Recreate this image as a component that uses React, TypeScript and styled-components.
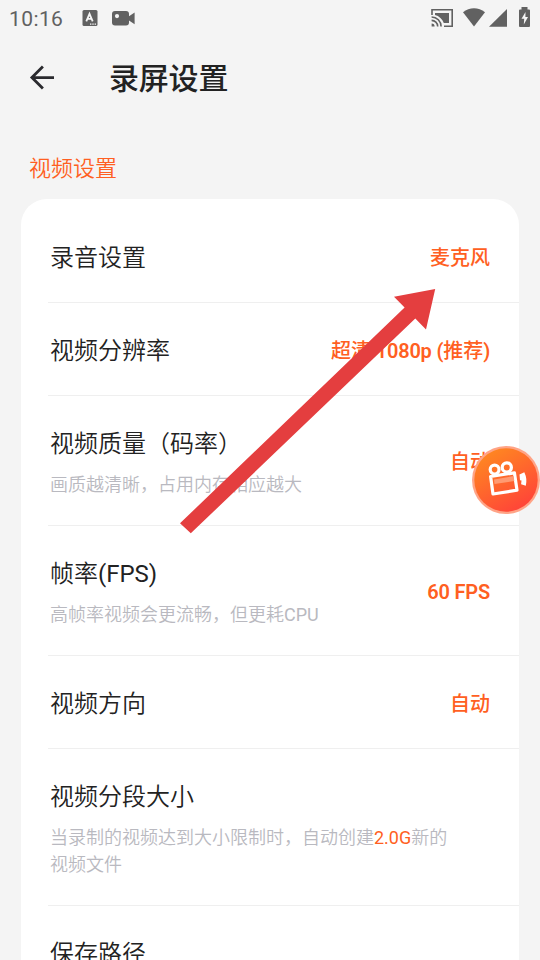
import React from "react";
import styled, { createGlobalStyle } from "styled-components";

const GlobalStyle = createGlobalStyle`
  *, *::before, *::after { box-sizing: border-box; }
  html, body { margin: 0; height: 100%; overflow: hidden; }
  body {
    background: #f4f4f4;
    font-family: Roboto, "Noto Sans CJK SC", sans-serif;
    color: #222;
  }
`;

const Screen = styled.div`
  position: relative;
  width: 540px;
  height: 960px;
  overflow: hidden;
  background: #f4f4f4;
`;

const StatusBar = styled.div`
  display: flex;
  align-items: center;
  height: 36px;
  padding: 0 9px 0 9px;
  color: #616161;
`;

const Clock = styled.span`
  width: 73px;
  font-size: 21px;
  letter-spacing: 0.4px;
  line-height: 36px;
  padding-top: 2px;
`;

const StatusIcons = styled.div`
  display: flex;
  align-items: center;
  gap: 13px;
`;

const SystemIcons = styled.div`
  display: flex;
  margin-left: auto;

  svg { display: block; }
`;

const Header = styled.header`
  display: flex;
  align-items: center;
  gap: 53px;
  height: 84px;
  padding-left: 28px;
`;

const BackButton = styled.button`
  display: flex;
  width: 28px;
  height: 28px;
  padding: 0;
  border: 0;
  background: none;
  color: #2a2a2e;
`;

const Title = styled.h1`
  margin: 0;
  padding-top: 1px;
  font-size: 30px;
  line-height: 44px;
  font-weight: 500;
  letter-spacing: -0.2px;
`;

const SectionLabel = styled.h2`
  margin: 30px 0 0 29px;
  height: 49px;
  font-size: 22px;
  line-height: 37px;
  font-weight: 350;
  color: #ff5f22;
`;

const Card = styled.main`
  width: 498px;
  height: 900px;
  margin-left: 21px;
  padding: 11px 0 0 27px;
  border-radius: 26px;
  background: #fff;
`;

const Row = styled.section`
  display: flex;
  align-items: center;
  justify-content: space-between;
  padding: 30px 29px 26px 2px;
  border-bottom: 1px solid #efefef;
`;

const RowText = styled.div`
  flex: none;
  max-width: 410px;
`;

const RowTitle = styled.div`
  font-size: 24px;
  line-height: 36px;
  font-weight: 350;
  color: #222;
`;

const RowHint = styled.div`
  margin-top: 9px;
  margin-bottom: 1px;
  font-size: 18px;
  line-height: 27px;
  font-weight: 350;
  color: #b9b9c0;
`;

const Regular = styled.span`
  font-weight: 400;
`;

const Accent = styled(Regular)`
  color: #ff5f22;
`;

const RowValue = styled.div<{ $raised?: boolean }>`
  margin-bottom: ${(p) => (p.$raised ? "2px" : "0")};
  font-size: 20px;
  line-height: 30px;
  font-weight: 500;
  color: #ff5f22;
  white-space: nowrap;
`;

const Latin = styled.span`
  font-weight: 600;
  letter-spacing: -0.2px;
`;

const ArrowOverlay = styled.svg`
  position: absolute;
  left: 178px;
  top: 287px;
`;

const FloatingButton = styled.svg`
  position: absolute;
  left: 471px;
  top: 445px;
`;

type Setting = {
  id: string;
  title: React.ReactNode;
  hint?: React.ReactNode;
  value?: React.ReactNode;
};

const settings: Setting[] = [
  { id: "audio", title: "录音设置", value: "麦克风" },
  {
    id: "resolution",
    title: "视频分辨率",
    value: <>超清<Latin> 1080p (</Latin>推荐<Latin>)</Latin></>,
  },
  { id: "quality", title: "视频质量（码率）", hint: "画质越清晰，占用内存相应越大", value: "自动" },
  {
    id: "fps",
    title: <>帧率<Regular>(FPS)</Regular></>,
    hint: <>高帧率视频会更流畅，但更耗<Regular>CPU</Regular></>,
    value: <Latin>60 FPS</Latin>,
  },
  { id: "orientation", title: "视频方向", value: "自动" },
  {
    id: "segment",
    title: "视频分段大小",
    hint: <>当录制的视频达到大小限制时，自动创建<Accent>2.0G</Accent>新的视频文件</>,
  },
  { id: "path", title: "保存路径" },
];

function LeftStatus() {
  return (
    <StatusIcons>
      <svg width="16" height="18" viewBox="0 0 16 18">
        <rect x="0.5" y="1" width="15" height="16" rx="1.5" fill="#616161" />
        <path d="M4.3 12.3 7.5 4.8 10.7 12.3M5.4 9.8h4.2" fill="none" stroke="#f5f5f5" strokeWidth="1.8" />
        <path d="M8 15.2h1.4M10.3 15.2h1.4M12.6 15.2h1.4" stroke="#f5f5f5" strokeWidth="1.2" />
      </svg>
      <svg width="24" height="18" viewBox="0 0 24 18">
        <rect x="1" y="2" width="17" height="14.6" rx="3" fill="#616161" />
        <path d="M18 7.3 23.6 3.5v11.8L18 11.4z" fill="#616161" />
        <circle cx="6" cy="7.1" r="2.1" fill="#f5f5f5" />
      </svg>
    </StatusIcons>
  );
}

function RightStatus() {
  return (
    <SystemIcons>
      <svg width="100" height="24" viewBox="431 6 100 24" fill="#616161">
        <path d="M432 15V9.8h20.2v16.4H444" fill="none" stroke="#616161" strokeWidth="1.6" />
        <path d="M435 13h14v10h-5.2c-1.4-4-4.7-7-8.8-8z" />
        <path d="M431.6 23.5a3 3 0 0 1 3 3h-3z" />
        <path d="M431.6 20.4a6.1 6.1 0 0 1 6.1 6.1M431.6 17a9.5 9.5 0 0 1 9.5 9.5" fill="none" stroke="#616161" strokeWidth="1.6" />
        <path d="M463 12.2c6.5-5.2 15.5-5.2 22 0L474 26.5z" />
        <path d="M507 9v17.8h-18z" />
        <path d="M519 10.5q0-1 1-1h1.5V7h6v2.5H529q1 0 1 1V26q0 1-1 1h-9q-1 0-1-1z" />
        <path d="M525.5 12 521.5 18.8h2.7L523.8 24.5 528 17h-2.6z" fill="#f5f5f5" />
      </svg>
    </SystemIcons>
  );
}

export default function App() {
  return (
    <>
      <GlobalStyle />
      <Screen>
        <StatusBar>
          <Clock>10:16</Clock>
          <LeftStatus />
          <RightStatus />
        </StatusBar>
        <Header>
          <BackButton aria-label="返回">
            <svg width="28" height="28" viewBox="0 0 28 28" fill="none" stroke="currentColor" strokeWidth="2.8">
              <path d="M26 13.6H4M14.9 2.6 3.9 13.6l11 11" />
            </svg>
          </BackButton>
          <Title>录屏设置</Title>
        </Header>
        <SectionLabel>视频设置</SectionLabel>
        <Card>
          {settings.map((item) => (
            <Row key={item.id}>
              <RowText>
                <RowTitle>{item.title}</RowTitle>
                {item.hint && <RowHint>{item.hint}</RowHint>}
              </RowText>
              {item.value && <RowValue $raised={Boolean(item.hint)}>{item.value}</RowValue>}
            </Row>
          ))}
        </Card>
        <ArrowOverlay width="260" height="250" viewBox="178 287 260 250">
          <path d="M435.2 289 394 296.8l10.6 10.7L180 523.3l10.8 10L415.3 318.6 426 329.5z" fill="#e43e3f" />
        </ArrowOverlay>
        <FloatingButton width="69" height="70" viewBox="471 445 69 70">
          <defs>
            <linearGradient id="recorder" x1="0.2" y1="0" x2="0.8" y2="1">
              <stop offset="0" stopColor="#ff8a20" />
              <stop offset="1" stopColor="#ff403a" />
            </linearGradient>
          </defs>
          <circle cx="506" cy="480" r="34" fill="#ffa487" />
          <circle cx="506" cy="480" r="31.7" fill="url(#recorder)" />
          <g fill="none" stroke="#fff" strokeWidth="3.2">
            <circle cx="494.6" cy="469.6" r="4.4" />
            <circle cx="506.8" cy="467.4" r="4.6" />
            <path d="M490.6 476.5 514.4 472.8 517 490.2 493 494z" strokeLinejoin="round" />
          </g>
          <path d="M494 479.5 513.5 476l.8 5-19.8 3z" fill="#ff9a72" />
          <path d="M519.5 474.5 524.3 472.2q3.2 6.5 1.5 13.6l-4.7-1.5.4-3.7-1.5-.3z" fill="#fff" />
        </FloatingButton>
      </Screen>
    </>
  );
}
